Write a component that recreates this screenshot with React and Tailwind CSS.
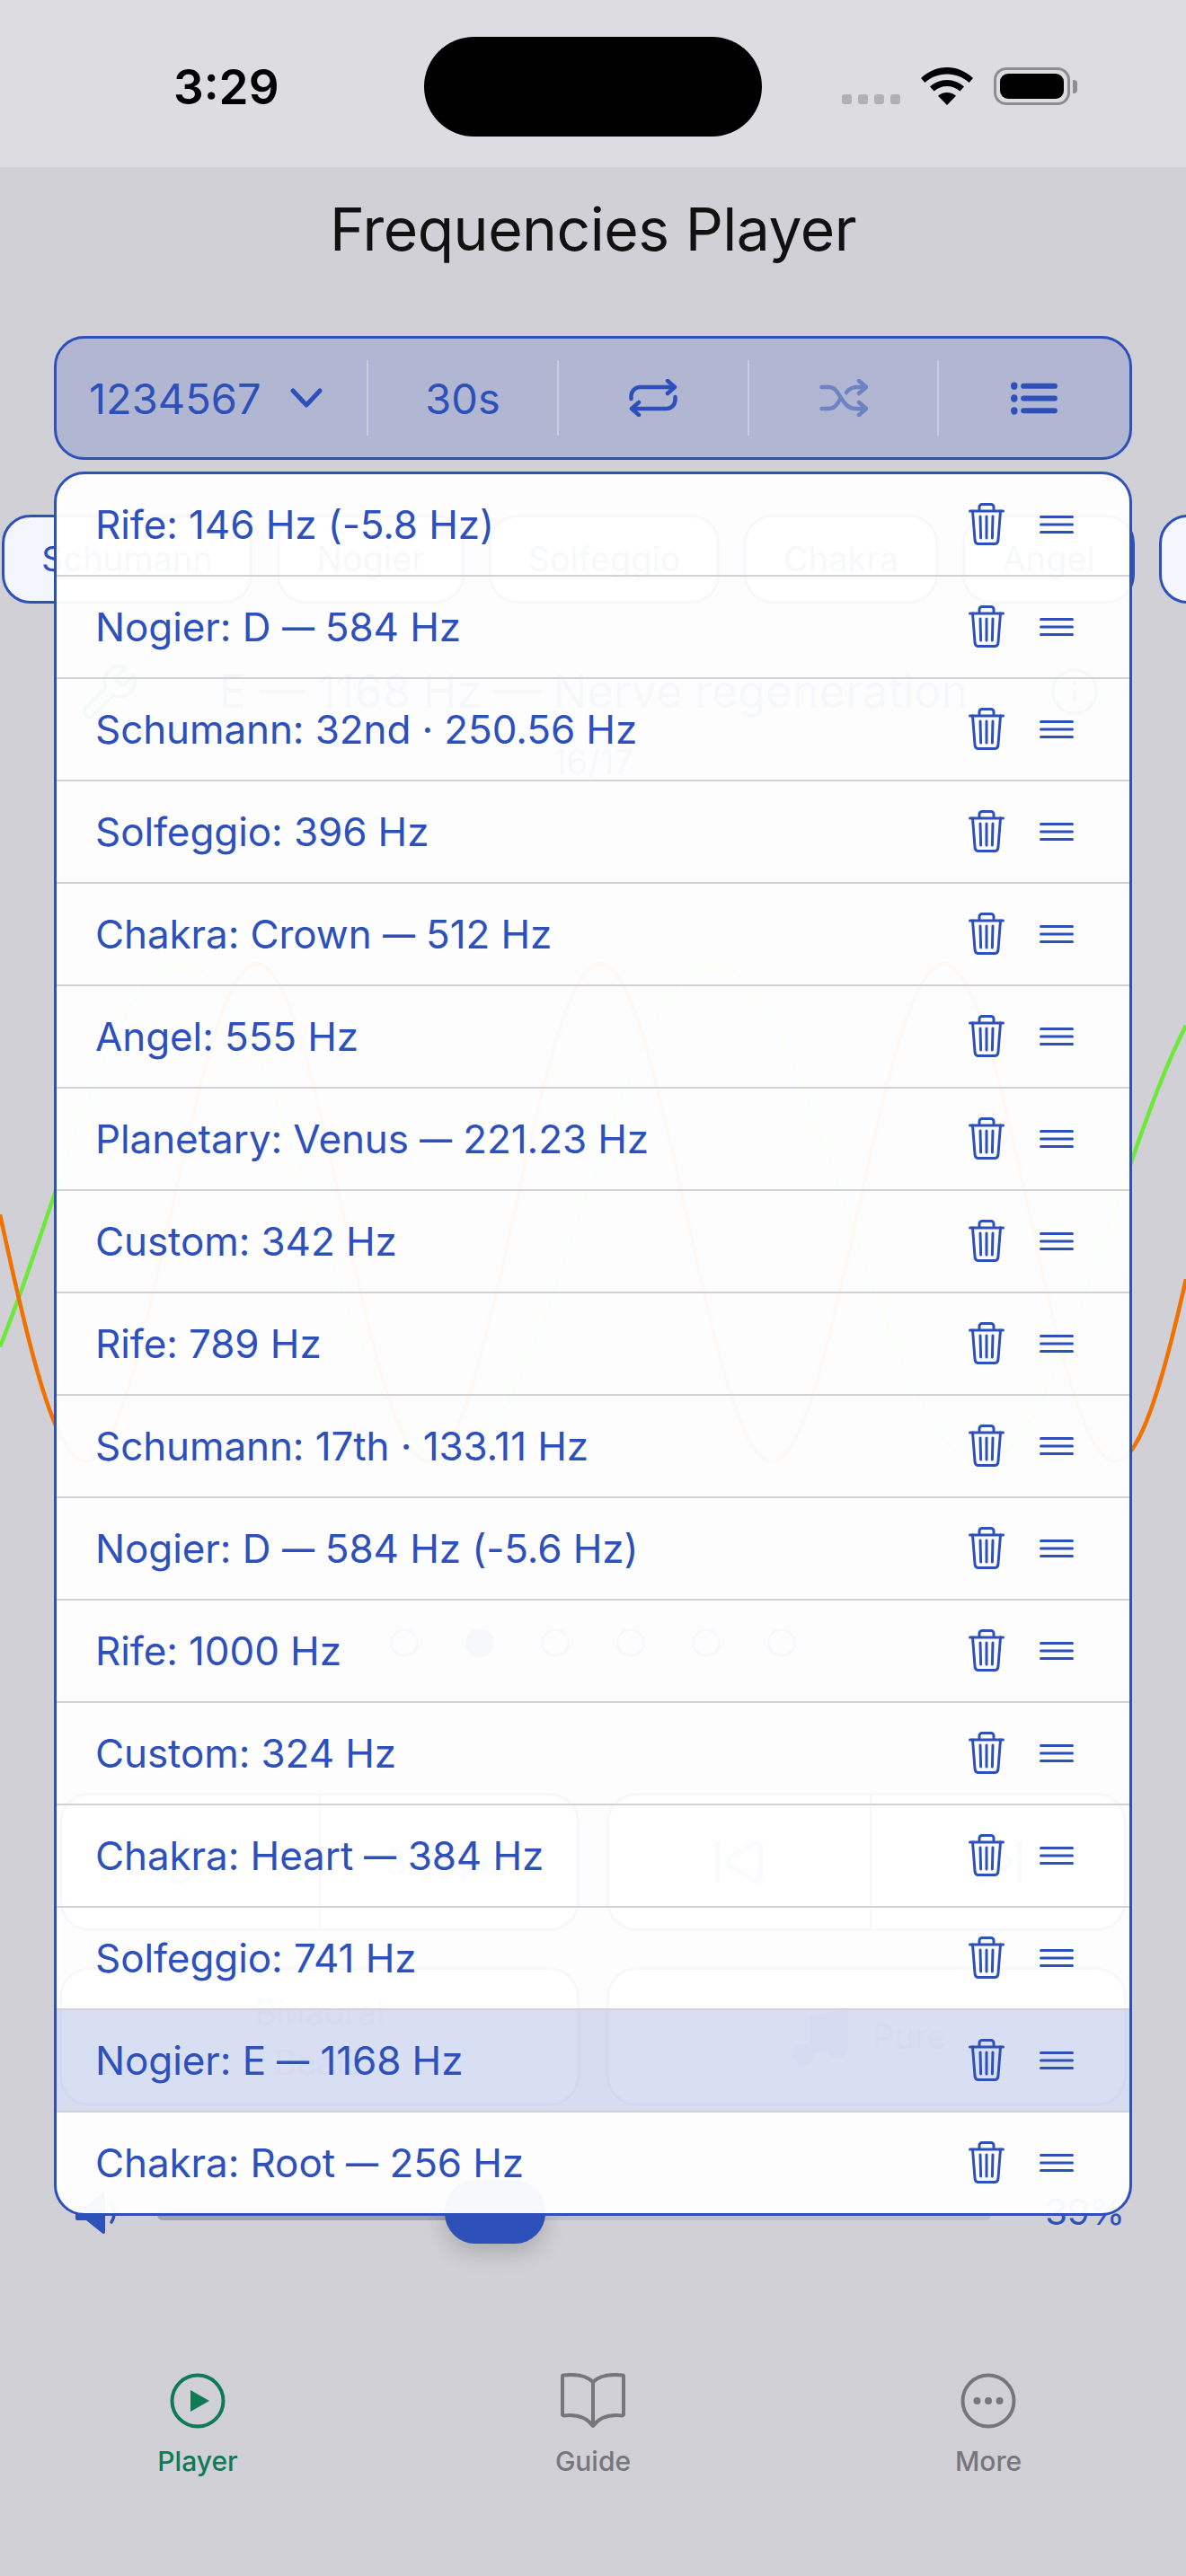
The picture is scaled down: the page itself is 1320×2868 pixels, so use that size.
import React from 'react';
import { Wrench, Info, Play, SkipBack, SkipForward, Music } from 'lucide-react';

const queue = [
  'Rife: 146 Hz (-5.8 Hz)',
  'Nogier: D — 584 Hz',
  'Schumann: 32nd · 250.56 Hz',
  'Solfeggio: 396 Hz',
  'Chakra: Crown — 512 Hz',
  'Angel: 555 Hz',
  'Planetary: Venus — 221.23 Hz',
  'Custom: 342 Hz',
  'Rife: 789 Hz',
  'Schumann: 17th · 133.11 Hz',
  'Nogier: D — 584 Hz (-5.6 Hz)',
  'Rife: 1000 Hz',
  'Custom: 324 Hz',
  'Chakra: Heart — 384 Hz',
  'Solfeggio: 741 Hz',
  'Nogier: E — 1168 Hz',
  'Chakra: Root — 256 Hz',
];

// wave curves, x/y in page pixels with the svg starting at y=1060
const wave = (peak, period) => {
  const pts = [];
  for (let x = 0; x <= 1320; x += 4) {
    const y = 290 - 277 * Math.cos((2 * Math.PI * (x - peak)) / period);
    pts.push(`${x},${y.toFixed(1)}`);
  }
  return pts.join(' ');
};

function TrashIcon() {
  return (
    <svg width="40" height="48" viewBox="0 0 40 48" fill="none" stroke="#2e50b9" strokeWidth="3" strokeLinecap="round" strokeLinejoin="round">
      <path d="M1.5 9h37" />
      <path d="M12 8V4.5A3 3 0 0 1 15 1.5h10a3 3 0 0 1 3 3V8" />
      <path d="M4.5 9l2.6 33a4 4 0 0 0 4 3.5h17.8a4 4 0 0 0 4-3.5L35.500 9" />
      <path d="M13 15l.6 24M20 15v24M27 15l-.6 24" />
    </svg>
  );
}

function DragIcon() {
  return (
    <svg width="38" height="22" viewBox="0 0 38 22" fill="none" stroke="#2e50b9" strokeWidth="3" strokeLinecap="round">
      <path d="M1.500 2.500h35M1.500 11h35M1.500 19.500h35" />
    </svg>
  );
}

function ListIcon() {
  return (
    <svg width="54" height="37" viewBox="0 0 56 40" fill="#2e50b9">
      <ellipse cx="4" cy="5" rx="4" ry="4.500" />
      <ellipse cx="4" cy="20" rx="4" ry="4.500" />
      <ellipse cx="4" cy="35" rx="4" ry="4.500" />
      <rect x="12" y="2" width="44" height="6.500" rx="3.200" />
      <rect x="12" y="16.700" width="44" height="6.500" rx="3.200" />
      <rect x="12" y="31.500" width="44" height="6.500" rx="3.200" />
    </svg>
  );
}

function RepeatIcon() {
  return (
    <svg width="54" height="42" viewBox="0 0 54 42" fill="none" stroke="#2e50b9" strokeWidth="4.500" strokeLinecap="round" strokeLinejoin="round">
      <path d="M2.500 22v-3a10 10 0 0 1 10-10h38" />
      <path d="M43 2l8 7-8 7" />
      <path d="M51.500 20v3a10 10 0 0 1-10 10h-38" />
      <path d="M11 26l-8 7 8 7" />
    </svg>
  );
}

function ShuffleIcon() {
  return (
    <svg className="opacity-50" width="54" height="42" viewBox="0 0 54 42" fill="none" stroke="#2e50b9" strokeWidth="4.500" strokeLinecap="round" strokeLinejoin="round">
      <path d="M2.500 9H10c8 0 10 6 14 12s8 12 16 12h11" />
      <path d="M2.500 33H10c8 0 10-6 14-12" />
      <path d="M30 15c3-4 6-6 11-6h10" />
      <path d="M44 2l8 7-8 7" />
      <path d="M44 26l8 7-8 7" />
    </svg>
  );
}

function StatusIcons() {
  return (
    <div className="absolute left-[937px] top-[75px] flex items-end">
      <div className="flex gap-[7px] mb-[1px]">
        <span className="w-[11px] h-[11px] rounded-[3px] bg-[#b0b0b6]" />
        <span className="w-[11px] h-[11px] rounded-[3px] bg-[#b0b0b6]" />
        <span className="w-[11px] h-[11px] rounded-[3px] bg-[#b0b0b6]" />
        <span className="w-[11px] h-[11px] rounded-[3px] bg-[#b0b0b6]" />
      </div>
      <svg className="ml-[23px]" width="58" height="42" viewBox="0 0 58 42" fill="#000">
        <path d="M29 0C18 0 8 4.500 0 12l4.500 5C11 11 19.500 7.500 29 7.500S47 11 53.500 17l4.500-5C50 4.500 40 0 29 0z" />
        <path d="M29 14c-7 0-13.500 2.800-19 7.500l4.600 5C18.500 23 23.500 21 29 21s10.500 2 14.400 5.500l4.600-5C42.500 16.800 36 14 29 14z" />
        <path d="M29 28c-3.800 0-7.500 1.400-10 3.800L29 42l10-10.200C36.500 29.400 32.800 28 29 28z" />
      </svg>
      <div className="ml-[23px] w-[85px] h-[42px] rounded-[14px] border-[3px] border-[#8e8e92] p-[4px]">
        <div className="w-full h-full rounded-[9px] bg-black" />
      </div>
      <div className="ml-[3px] mb-[13px] w-[5px] h-[15px] rounded-r-[4px] bg-[#8e8e92]" />
    </div>
  );
}

// the em dash in the reference font is narrower than Inter's
function QueueName({ name }) {
  const parts = name.split('—');
  if (parts.length === 1) return name;
  return (
    <>
      {parts[0]}
      <span className="inline-block origin-left scale-x-[0.82] -mr-[8px]">—</span>
      {parts[1]}
    </>
  );
}

export default function App() {
  return (
    <div className="relative w-[1320px] h-[2868px] overflow-hidden bg-[#d0d0d6] font-['Inter',sans-serif] flex flex-col">
      {/* status bar */}
      <div className="relative h-[186px] shrink-0 bg-[#dcdce1]">
        <span className="absolute left-[193px] top-[64px] text-[53px] leading-[66px] font-semibold text-black">3:29</span>
        <div className="absolute left-[472px] top-[41px] w-[376px] h-[111px] rounded-[56px] bg-black" />
        <StatusIcons />
      </div>

      <div className="h-[188px] shrink-0 flex justify-center pt-[29px]">
        <h1 className="text-[66px] leading-[80px] tracking-[-0.5px] font-normal text-[#111]">Frequencies Player</h1>
      </div>

      {/* toolbar */}
      <div className="mx-[60px] h-[138px] shrink-0 rounded-[34px] border-[3px] border-[#2e50b9] bg-[#b1b7d2] flex items-center text-[#2e50b9]">
        <div className="w-[347px] h-[84px] flex items-center pl-[36px] gap-[32px] border-r-2 border-[#c8cce0]">
          <span className="text-[47px] leading-none">1234567</span>
          <svg width="36" height="22" viewBox="0 0 36 22" fill="none" stroke="#2e50b9" strokeWidth="5" strokeLinecap="round" strokeLinejoin="round">
            <path d="M3 3l15 16L33 3" />
          </svg>
        </div>
        <div className="w-[212px] h-[84px] flex items-center justify-center border-r-2 border-[#c8cce0]">
          <span className="text-[47px] leading-none">30s</span>
        </div>
        <div className="w-[212px] h-[84px] flex items-center justify-center border-r-2 border-[#c8cce0]">
          <RepeatIcon />
        </div>
        <div className="w-[211px] h-[84px] flex items-center justify-center border-r-2 border-[#c8cce0]">
          <ShuffleIcon />
        </div>
        <div className="flex-1 h-[84px] flex items-center justify-center">
          <ListIcon />
        </div>
      </div>

      {/* category chips, mostly under the queue panel */}
      <div className="mt-[61px] h-[99px] shrink-0 flex gap-[27px] pl-[2px] text-[38px] text-[#2e50b9]">
        {[
          ['Schumann', 'w-[279px]'],
          ['Nogier', 'w-[209px]'],
          ['Solfeggio', 'w-[257px]'],
          ['Chakra', 'w-[216px]'],
          ['Angel', 'w-[192px]'],
        ].map(([label, width]) => (
          <div key={label} className={`${width} shrink-0 h-full rounded-[32px] border-[3px] border-[#2e50b9] bg-[#f3f6fd] flex items-center justify-center`}>
            {label}
          </div>
        ))}
        <div className="w-[260px] shrink-0 h-full rounded-[32px] border-[3px] border-[#2e50b9] bg-[#f3f6fd]" />
      </div>

      <div className="mt-[68px] h-[60px] shrink-0 flex items-center pl-[88px] text-[#2e50b9]">
        <Wrench size={68} strokeWidth={1.500} className="text-[#0f7a55]" />
        <span className="ml-[88px] text-[50.500px] leading-none whitespace-nowrap">E — 1168 Hz — Nerve regeneration</span>
        <Info size={58} strokeWidth={1.500} className="ml-[90px] text-[#0f7a55]" />
      </div>
      <div className="mt-[23px] h-[50px] shrink-0 text-center text-[38px] leading-[50px] text-[#2e50b9]">16/17</div>

      {/* wave */}
      <svg className="mt-[187px] shrink-0" width="1320" height="580" viewBox="0 0 1320 580" fill="none" strokeWidth="4.500">
        <polyline points={wave(202, 593)} stroke="#6fe83c" />
        <polyline points={wave(286, 382)} stroke="#f07000" />
      </svg>

      {/* page dots */}
      <div className="mt-[173px] h-[32px] shrink-0 flex justify-center gap-[52px]">
        {[0, 1, 2, 3, 4, 5].map((i) => (
          <span key={i} className={i === 1 ? 'w-[32px] h-[32px] rounded-full bg-[#2e50b9]' : 'w-[32px] h-[32px] rounded-full border-[3px] border-[#2e50b9]'} />
        ))}
      </div>

      {/* transport buttons */}
      <div className="mt-[151px] mx-[66px] grid grid-cols-2 gap-x-[30px] gap-y-[40px] text-[#2e50b9] text-[38px]">
        <div className="h-[154px] rounded-[34px] border-[3px] border-[#2e50b9] bg-[#f3f6fd] flex">
          <div className="w-[288px] flex items-center justify-center border-r-2 border-[#2e50b9]">
            <Play size={64} strokeWidth={2} className="opacity-60" />
          </div>
          <div className="flex-1 flex items-center justify-center opacity-60">Stopper</div>
        </div>
        <div className="h-[154px] rounded-[34px] border-[3px] border-[#2e50b9] bg-[#f3f6fd] flex">
          <div className="w-[292px] flex items-center justify-center border-r-2 border-[#2e50b9]">
            <SkipBack size={64} strokeWidth={2} className="opacity-60" />
          </div>
          <div className="flex-1 flex items-center justify-center">
            <SkipForward size={64} strokeWidth={2} className="opacity-60" />
          </div>
        </div>
        <div className="h-[155px] rounded-[34px] border-[3px] border-[#2e50b9] bg-[#f3f6fd] flex flex-col items-center justify-center leading-[56px]">
          <span className="opacity-60">Binaural</span>
          <span className="opacity-60">Beats</span>
        </div>
        <div className="h-[155px] rounded-[34px] border-[3px] border-[#2e50b9] bg-[#f3f6fd] flex items-center justify-center gap-[20px]">
          <Music size={76} strokeWidth={1.500} className="opacity-60 fill-current" />
          <span className="opacity-60">Pure</span>
        </div>
      </div>

      {/* volume */}
      <div className="mt-[82px] h-[71px] shrink-0 relative">
        <svg className="absolute left-[84px] top-[13px]" width="48" height="48" viewBox="0 0 48 48" fill="#2e50b9">
          <path d="M2 16h10L30 1.500c1.500-1 3-.2 3 1.500v42c0 1.700-1.500 2.500-3 1.500L12 32H2a2 2 0 0 1-2-2V18a2 2 0 0 1 2-2z" />
          <path d="M40 14c4 6 4 14 0 20" fill="none" stroke="#2e50b9" strokeWidth="3.500" strokeLinecap="round" />
        </svg>
        <div className="absolute left-[175px] top-[31px] w-[928px] h-[14px] rounded-[6px] bg-[#c0c0c8] overflow-hidden">
          <div className="w-[340px] h-full bg-[#a0a2ac]" />
        </div>
        <div className="absolute left-[495px] top-0 w-[112px] h-[71px] rounded-[34px] bg-[#2e50b9] shadow-[0_10px_24px_rgba(0,0,0,0.18)]" />
        <span className="absolute right-[68px] top-[13px] text-[40px] leading-[46px] text-[#2e50b9]">39%</span>
      </div>

      {/* tab bar */}
      <div className="mt-[144px] grid grid-cols-3 w-full text-[30px] font-medium text-[#77777b]">
        <div className="flex flex-col items-center text-[#0f7a55]">
          <svg width="62" height="62" viewBox="0 0 62 62" fill="none">
            <circle cx="31" cy="31" r="28.500" stroke="#0f7a55" strokeWidth="4" />
            <path d="M23 19l21 12-21 12z" fill="#0f7a55" />
          </svg>
          <span className="mt-[14px] leading-[44px]">Player</span>
        </div>
        <div className="flex flex-col items-center">
          <svg width="72" height="62" viewBox="0 0 72 62" fill="none" stroke="#77777b" strokeWidth="4" strokeLinejoin="round">
            <path d="M36 10C29 3 16 1 3 2.500c-.8.100-1 .7-1 1.500v42c0 1 .6 1.500 1.500 1.400C16 46 28 48 36 59c8-11 20-13 32.500-11.600.9.100 1.500-.4 1.500-1.400V4c0-.8-.2-1.400-1-1.500C56 1 43 3 36 10z" />
            <path d="M36 10v46" />
          </svg>
          <span className="mt-[14px] leading-[44px]">Guide</span>
        </div>
        <div className="flex flex-col items-center">
          <svg width="62" height="62" viewBox="0 0 62 62" fill="none">
            <circle cx="31" cy="31" r="28.500" stroke="#77777b" strokeWidth="4" />
            <circle cx="18.500" cy="31" r="4" fill="#77777b" />
            <circle cx="31" cy="31" r="4" fill="#77777b" />
            <circle cx="43.500" cy="31" r="4" fill="#77777b" />
          </svg>
          <span className="mt-[14px] leading-[44px]">More</span>
        </div>
      </div>

      {/* queue panel over the player */}
      <div className="absolute left-[60px] top-[525px] w-[1200px] h-[1942px] rounded-[34px] border-[3px] border-[#2e50b9] bg-white/96 overflow-hidden flex flex-col">
        {queue.map((name, i) => (
          <div
            key={i}
            className={`flex-1 min-h-0 flex items-center pl-[43px] pr-[62px] ${i < queue.length - 1 ? 'border-b-2 border-[#d2d2d6]' : ''} ${i === 15 ? 'bg-[#2e50b9]/18' : ''}`}
          >
            <span className="flex-1 text-[44px] leading-none tracking-[-0.1px] text-[#2e50b9] whitespace-nowrap"><QueueName name={name} /></span>
            <TrashIcon />
            <span className="ml-[39px]"><DragIcon /></span>
          </div>
        ))}
      </div>
    </div>
  );
}
